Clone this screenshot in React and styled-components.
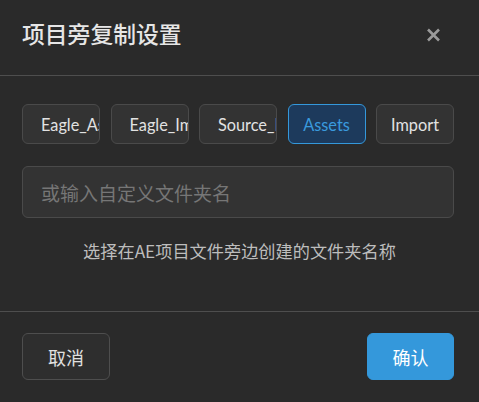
import React from "react";
import styled, { createGlobalStyle } from "styled-components";

const Global = createGlobalStyle`
  html, body { margin: 0; padding: 0; background: #2a2a2a; }
  body { font-family: "Noto Sans CJK SC", "Liberation Sans", sans-serif; }
  * { box-sizing: border-box; }
`;

const Dialog = styled.div`
  width: 479px;
  height: 402px;
  background: #2a2a2a;
  display: flex;
  flex-direction: column;
  color: #e0e0e0;
`;

const Header = styled.div`
  height: 76px;
  display: flex;
  align-items: center;
  justify-content: space-between;
  padding: 0 38px 6px 22px;
  border-bottom: 1px solid #4e4e4e;
`;

const Title = styled.h2`
  margin: 0;
  font-size: 22.8px;
  font-weight: 500;
  color: #e6e6e6;
  font-family: "Noto Sans CJK SC", sans-serif;
  line-height: 1;
`;

const CloseButton = styled.button`
  background: none;
  border: none;
  padding: 0;
  width: 16px;
  height: 16px;
  display: flex;
  align-items: center;
  justify-content: center;
  cursor: pointer;
  color: #9a9a9a;
`;

const Body = styled.div`
  flex: 1;
  display: flex;
  flex-direction: column;
  padding: 28px 25px 0 22px;
  border-bottom: 1px solid #4e4e4e;
`;

const ChipRow = styled.div`
  display: flex;
  gap: 10.5px;
`;

const Chip = styled.button`
  width: 78px;
  height: 40px;
  flex: none;
  padding: 0 18px;
  border-radius: 6px;
  border: 1px solid ${(p) => (p.$active ? "#3498db" : "#4a4a4a")};
  background: ${(p) => (p.$active ? "#1d3a5c" : "#333333")};
  color: ${(p) => (p.$active ? "#3a9ade" : "#e2e2e2")};
  font-family: Lato, sans-serif;
  font-size: 16.3px;
  white-space: nowrap;
  overflow: hidden;
  display: flex;
  align-items: center;
  justify-content: ${(p) => (p.$fits ? "center" : "flex-start")};
  cursor: pointer;
`;

const Input = styled.input`
  margin-top: 22px;
  height: 52px;
  width: 100%;
  border-radius: 6px;
  border: 1px solid #4a4a4a;
  background: #333333;
  padding: 0 18px;
  font-size: 19px;
  color: #e0e0e0;
  font-family: "Noto Sans CJK SC", sans-serif;
  outline: none;
  &::placeholder { color: #767676; }
`;

const Hint = styled.p`
  margin: 20px 0 0;
  text-align: center;
  font-size: 17.2px;
  color: #bdbdbd;
  font-family: "Noto Sans CJK SC", sans-serif;
  line-height: 26px;
  padding-left: 3px;
`;

const Footer = styled.div`
  height: 90px;
  display: flex;
  align-items: flex-start;
  justify-content: space-between;
  padding: 21px 25px 0 22px;
`;

const FooterButton = styled.button`
  height: 47px;
  width: ${(p) => p.$w}px;
  border-radius: 6px;
  font-size: 18px;
  font-family: "Noto Sans CJK SC", sans-serif;
  cursor: pointer;
  border: 1px solid ${(p) => (p.$primary ? "#3498db" : "#4e4e4e")};
  background: ${(p) => (p.$primary ? "#3498db" : "#2e2e2e")};
  color: ${(p) => (p.$primary ? "#ffffff" : "#e0e0e0")};
`;

const chips = [
  { label: "Eagle_Assets" },
  { label: "Eagle_Import" },
  { label: "Source_Files" },
  { label: "Assets", active: true, fits: true },
  { label: "Import", fits: true },
];

export default function App() {
  return (
    <>
      <Global />
      <Dialog>
        <Header>
          <Title>项目旁复制设置</Title>
          <CloseButton aria-label="关闭">
            <svg width="15" height="14" viewBox="0 0 15 14">
              <path d="M2 1.5 L13 12.5 M13 1.5 L2 12.5" stroke="currentColor" strokeWidth="2.6" strokeLinecap="butt" />
            </svg>
          </CloseButton>
        </Header>
        <Body>
          <ChipRow>
            {chips.map((c) => (
              <Chip key={c.label} $active={c.active} $fits={c.fits}>
                {c.label}
              </Chip>
            ))}
          </ChipRow>
          <Input placeholder="或输入自定义文件夹名" />
          <Hint>选择在AE项目文件旁边创建的文件夹名称</Hint>
        </Body>
        <Footer>
          <FooterButton $w={88}>取消</FooterButton>
          <FooterButton $w={87} $primary>确认</FooterButton>
        </Footer>
      </Dialog>
    </>
  );
}
